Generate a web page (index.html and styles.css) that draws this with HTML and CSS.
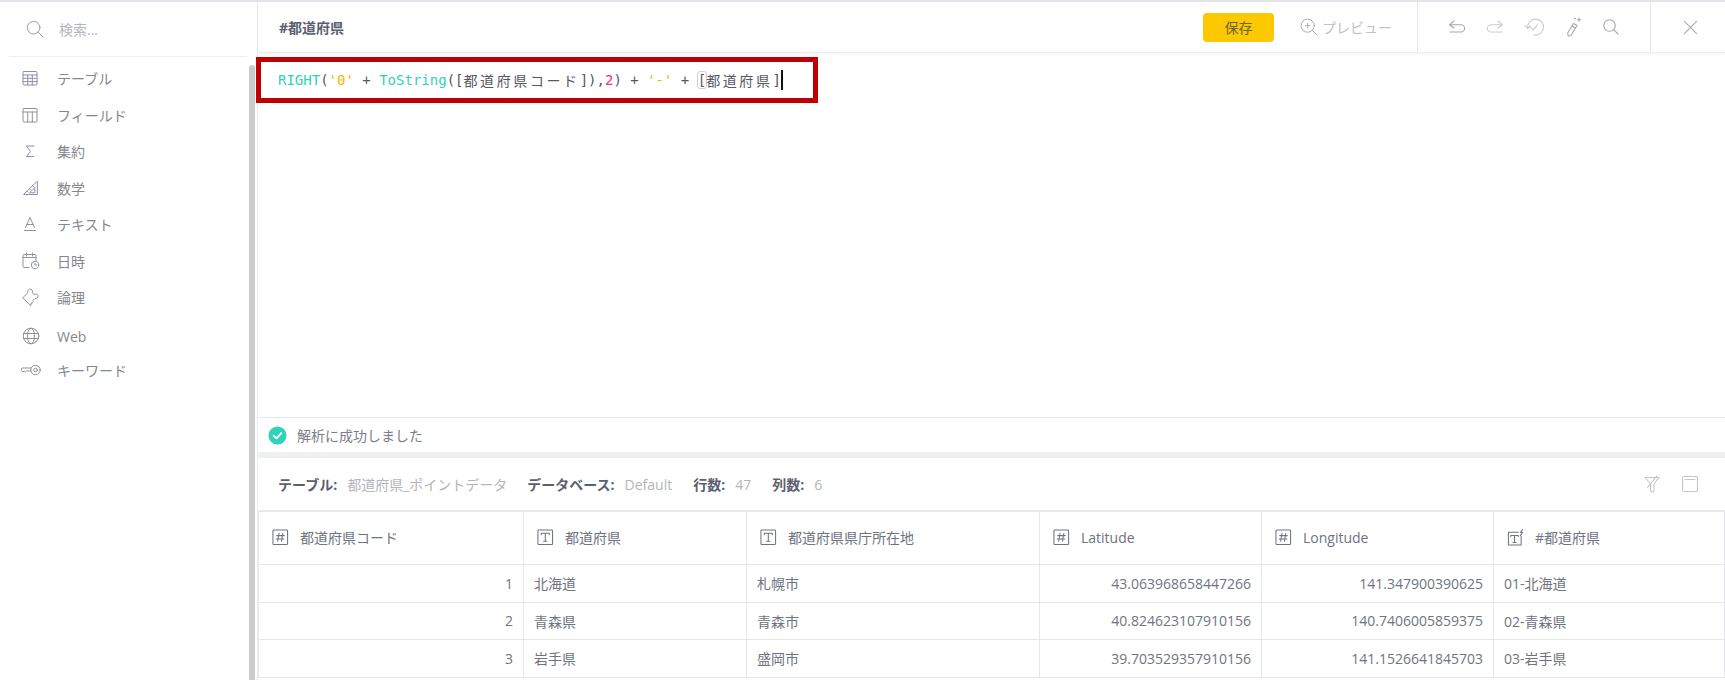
FILE: index.html
```html
<!DOCTYPE html>
<html lang="ja">
<head>
<meta charset="utf-8">
<title>#都道府県</title>
<link rel="stylesheet" href="styles.css">
</head>
<body>
<div class="app">
  <aside class="side">
    <div class="search">
      <svg class="search-ic" viewBox="0 0 20 20"><circle cx="8.500" cy="8.500" r="7"/><path d="M13.500 13.500 19 19"/></svg>
      <span>検索...</span>
    </div>
    <div class="side-body">
      <ul class="cats">
        <li><svg viewBox="0 0 16 16"><rect x="1" y="1.500" width="14" height="13.500" rx="1"/><path d="M1 5h14M1 8.300h14M1 11.600h14M5.700 5v10M10.300 5v10"/></svg>テーブル</li>
        <li><svg viewBox="0 0 16 16"><rect x="1" y="1.500" width="14" height="13.500" rx="1"/><path d="M1 5h14M5.700 5v10M10.300 5v10"/></svg>フィールド</li>
        <li><svg viewBox="0 0 16 16"><path d="M12 3H4.500L8.500 8.500 4.500 13.500H12"/></svg>集約</li>
        <li><svg viewBox="0 0 16 16"><path d="M15 1.500 1.500 14.500H15ZM12.500 8 7.500 12.800h5ZM10.500 5.500l1.500 1.500M7.500 8.500 9 10M4.800 11l1.200 1.200"/></svg>数学</li>
        <li><svg viewBox="0 0 16 16"><path d="M3.500 11.500 8 1.500l4.500 10M5 8.500h6M2.500 14.500h11"/></svg>テキスト</li>
        <li><svg class="big" viewBox="0 0 18 18"><path d="M7 15.500H2a1 1 0 0 1-1-1V3.500a1 1 0 0 1 1-1h11a1 1 0 0 1 1 1V9M1 5.500h13M4.500 1v3M10.500 1v3"/><circle cx="13" cy="13" r="3.700"/><path d="M13 11v2h1.800"/></svg>日時</li>
        <li><svg class="big" viewBox="0 0 18 18"><path d="M1 9.500 6 4.500C5 2.500 7 .5 9 1.300 10.700 2 10.800 3.700 10.200 4.800L12 6.500C13.500 5.500 15.500 6 16 7.700 16.500 9.700 14.500 11.200 13 10.500L11 12.500C12 14 10.500 15.500 9.300 14.800L8.800 17.300Z"/></svg>論理</li>
        <li><svg class="big" viewBox="0 0 18 18"><circle cx="9" cy="9" r="7.800"/><ellipse cx="9" cy="9" rx="3.500" ry="7.800"/><path d="M1.500 6.500h15M1.500 11.500h15"/></svg>Web</li>
        <li><svg class="key" viewBox="0 0 20 12"><circle cx="14.500" cy="6" r="4.700"/><circle cx="14.500" cy="6" r="1.800"/><path d="M9.800 4H1.500a1 1 0 0 0-1 1v1.800l1.500 1.200 1.200-1 1.200 1 1.200-1h4.400"/></svg>キーワード</li>
      </ul>
      <div class="thumb"></div>
    </div>
  </aside>
  <main class="main">
    <header class="top">
      <h1>#都道府県</h1>
      <button class="save">保存</button>
      <div class="preview">
        <svg viewBox="0 0 20 20"><circle cx="8.500" cy="8.500" r="7.300"/><path d="M13.800 13.800 19 19M8.500 6v5M6 8.500h5"/></svg>
        <span>プレビュー</span>
      </div>
      <div class="tools">
        <svg class="dark" viewBox="0 0 18 18"><path d="M6 3 1.500 6.800 6 10M1.500 6.800H13a3.300 3.300 0 0 1 0 7.200H2"/></svg>
        <svg viewBox="0 0 18 18"><path d="M12 3l4.500 3.800L12 10M16.500 6.800H5a3.300 3.300 0 0 0 0 7.200h11"/></svg>
        <svg class="wide" viewBox="0 0 20 20"><path d="M3.500 10.500A8 8 0 1 1 10 18M1 8.500l2.500 3 3-2.500M7 10.500l2.300 2.300 4-5"/></svg>
        <svg class="dark tall" viewBox="0 0 18 20"><path d="M9.500 6.500 13 8.500 7 18.500 4.200 19 3.700 16ZM8 9l3.500 2M15 1v3.500M13.300 2.700h3.400M10.500 1.500h1"/></svg>
        <svg class="dark" viewBox="0 0 18 18"><circle cx="7.500" cy="7.500" r="5.700"/><path d="M11.700 11.700 16 16"/></svg>
      </div>
      <div class="close">
        <svg viewBox="0 0 16 16"><path d="M1.500 1.500 14.500 14.500M14.500 1.500 1.500 14.500"/></svg>
      </div>
    </header>
    <section class="editor">
      <div class="code"><span class="fn">RIGHT</span>(<span class="str">'0'</span> + <span class="fn">ToString</span>([<span class="cjk">都道府県コード</span>]),<span class="num">2</span>) + <span class="str">'-'</span> + <span class="match">[</span><span class="cjk">都道府県</span>]<i class="caret"></i></div>
    </section>
    <div class="status">
      <svg viewBox="0 0 20 20"><circle cx="10" cy="10" r="9.500" class="ok"/><path d="M6 10.500 9 13 14 7.500" class="tick"/></svg>
      <span>解析に成功しました</span>
    </div>
    <div class="gap"></div>
    <div class="meta">
      <b>テーブル:</b><span class="v1">都道府県_ポイントデータ</span>
      <b>データベース:</b><span class="v2">Default</span>
      <b>行数:</b><span class="v3">47</span>
      <b>列数:</b><span class="v4">6</span>
      <div class="meta-ic">
        <svg viewBox="0 0 18 18"><path d="M2 2.500h14L11 9v6.500a1.700 1.700 0 0 1-3.400 0V9ZM14 .8 4.500 12.500"/></svg>
        <svg viewBox="0 0 18 18"><rect x="1.500" y="1.500" width="15" height="15" rx="1.500"/><path d="M4 4.500h10"/></svg>
      </div>
    </div>
    <table class="grid">
      <colgroup><col class="c1"><col class="c2"><col class="c3"><col class="c4"><col class="c5"><col class="c6"></colgroup>
      <thead>
        <tr>
          <th><svg viewBox="0 0 18 18"><rect x="1" y="1" width="15.500" height="15.500" rx="1"/><path d="M7.500 4.500 6 13M11.500 4.500 10 13M5 7h8M4.500 10.500h8"/></svg>都道府県コード</th>
          <th><svg viewBox="0 0 18 18"><rect x="1" y="1" width="15.500" height="15.500" rx="1"/><path d="M4.500 6V4.500h8.500V6M8.800 4.500V13M7 13h3.500"/></svg>都道府県</th>
          <th><svg viewBox="0 0 18 18"><rect x="1" y="1" width="15.500" height="15.500" rx="1"/><path d="M4.500 6V4.500h8.500V6M8.800 4.500V13M7 13h3.500"/></svg>都道府県県庁所在地</th>
          <th><svg viewBox="0 0 18 18"><rect x="1" y="1" width="15.500" height="15.500" rx="1"/><path d="M7.500 4.500 6 13M11.500 4.500 10 13M5 7h8M4.500 10.500h8"/></svg>Latitude</th>
          <th><svg viewBox="0 0 18 18"><rect x="1" y="1" width="15.500" height="15.500" rx="1"/><path d="M7.500 4.500 6 13M11.500 4.500 10 13M5 7h8M4.500 10.500h8"/></svg>Longitude</th>
          <th><svg viewBox="0 0 18 18"><path d="M12 3.500H1.500V17H15V8M4 8V6.800h8V8M8 6.800v7.500M6.300 14.300h3.400M16.500 .5l-2.300 3h2.300L14.200 7"/></svg>#都道府県</th>
        </tr>
      </thead>
      <tbody>
        <tr><td class="r">1</td><td>北海道</td><td>札幌市</td><td class="r">43.063968658447266</td><td class="r">141.347900390625</td><td>01-北海道</td></tr>
        <tr><td class="r">2</td><td>青森県</td><td>青森市</td><td class="r">40.824623107910156</td><td class="r">140.7406005859375</td><td>02-青森県</td></tr>
        <tr><td class="r">3</td><td>岩手県</td><td>盛岡市</td><td class="r">39.703529357910156</td><td class="r">141.1526641845703</td><td>03-岩手県</td></tr>
      </tbody>
    </table>
  </main>
</div>
</body>
</html>
```
FILE: styles.css
```css
* { box-sizing: border-box; }
html, body { margin: 0; height: 100%; overflow: hidden; }
body { font-family: "Open Sans", "Noto Sans CJK JP", sans-serif; background: #fff; color: #5b5f6e; }
svg { fill: none; stroke-linecap: round; stroke-linejoin: round; flex: none; }

.app { display: flex; height: 680px; border-top: 2px solid #e3e4ea; overflow: hidden; }

.side { width: 258px; flex: none; display: flex; flex-direction: column; padding-left: 9px; border-right: 1px solid #eceded; }
.search { height: 55px; width: 238px; display: flex; align-items: center; border-bottom: 1px solid #eff0f2; padding-left: 17px; font-size: 14px; color: #b4b6bd; }
.search-ic { width: 18px; height: 18px; margin-right: 15px; stroke: #9a9da8; stroke-width: 1.1; }
.side-body { flex: 1; position: relative; min-height: 0; }
.cats { list-style: none; margin: 0; padding: 3px 0 0 13px; }
.cats li { height: 36.500px; display: flex; align-items: center; font-size: 14px; color: #85878f; }
.cats li:nth-child(8) { padding-top: 5px; }
.cats svg { width: 16px; height: 16px; margin-right: 19px; stroke: #8e92a3; stroke-width: 1; }
.cats svg.big { width: 18px; height: 18px; margin-right: 17px; }
.cats svg.key { width: 20px; height: 12px; margin-left: -1px; margin-right: 16px; }
.thumb { position: absolute; right: 2px; top: 8px; bottom: 0; width: 6px; background: #cbcbcb; border-radius: 3px 3px 0 0; }

.main { flex: 1; min-width: 0; display: flex; flex-direction: column; }

.top { height: 51px; flex: none; display: flex; align-items: center; padding-left: 21px; border-bottom: 1px solid #eceef0; box-shadow: 0 1px 3px rgba(0,0,0,.06); }
.top h1 { margin: 0 auto 0 0; font-size: 14px; font-weight: 700; color: #5b5f6e; }
.save { width: 71px; height: 29px; flex: none; border: 0; border-radius: 4px; background: #fcc900; color: #6c6237; font: 14px "Open Sans", "Noto Sans CJK JP", sans-serif; padding: 0; }
.preview { display: flex; align-items: center; width: 143px; flex: none; padding-left: 26px; font-size: 14px; color: #c0c2c9; }
.preview svg { width: 18px; height: 18px; margin-right: 4px; stroke: #a9acb5; stroke-width: 1.1; }
.tools { height: 100%; width: 233px; flex: none; border-left: 1px solid #e6e7ea; display: flex; align-items: center; gap: 20px; padding-left: 30px; }
.tools svg { width: 18px; height: 18px; stroke: #c9cbd1; stroke-width: 1.1; }
.tools svg.dark { stroke: #a5a8b3; }
.tools svg.wide { width: 20px; height: 20px; }
.tools svg.tall { height: 20px; }
.close { height: 100%; width: 75px; flex: none; border-left: 1px solid #e6e7ea; display: flex; align-items: center; justify-content: center; padding-left: 5px; }
.close svg { width: 15px; height: 15px; stroke: #a5a8b3; stroke-width: 1.1; }

.editor { height: 364px; flex: none; padding-top: 4px; }
.code { width: 562px; height: 46px; margin-left: -2px; border: 5px solid #c00000; padding: 0 0 0 17px; display: flex; align-items: center; font: 14px "DejaVu Sans Mono", monospace; color: #55585f; white-space: pre; }
.fn { color: #2fd3b9; }
.str { color: #f5b400; }
.num { color: #f0307f; }
.cjk { font-family: "Noto Sans CJK JP", sans-serif; letter-spacing: 2.600px; }
.match { outline: 1px solid #cfd1d6; border-radius: 2px; }
.caret { display: inline-block; width: 2px; height: 20px; background: #111; }

.status { height: 35px; flex: none; border-top: 1px solid #e6e7ea; display: flex; align-items: center; padding-left: 10px; font-size: 14px; color: #7a7d87; }
.status svg { width: 19px; height: 19px; margin-right: 10px; }
.ok { fill: #2fd3b9; }
.tick { stroke: #fff; stroke-width: 2; }
.gap { height: 6px; flex: none; background: #eff0f2; }

.meta { height: 53px; flex: none; display: flex; align-items: center; padding-left: 20px; font-size: 14px; color: #b3b5bb; border-bottom: 1px solid #e9eaec; }
.meta b { color: #5b5f6e; margin-right: 10px; }
.v1 { margin-right: 20px; }
.v2 { margin-right: 21px; }
.v3 { margin-right: 21px; }
.meta-ic { margin-left: auto; display: flex; align-items: center; gap: 20px; padding-right: 26px; }
.meta-ic svg { height: 18px; width: 18px; stroke: #c4c6cc; stroke-width: 1.1; }

.grid { width: 1467px; table-layout: fixed; border-collapse: collapse; font-size: 14px; color: #707480; }
.c1 { width: 265px; } .c2 { width: 223px; } .c3 { width: 293px; } .c4 { width: 222px; } .c5 { width: 232px; }
.grid th, .grid td { border: 1px solid #e6e7ea; padding: 0 10px; overflow: hidden; white-space: nowrap; }
.grid th { height: 53px; font-weight: 400; text-align: left; padding: 0 10px 2px 13px; color: #6f7380; }
.grid th svg { width: 17px; height: 17px; stroke: #6f7380; stroke-width: 1.1; margin-right: 11px; vertical-align: -3px; }
.grid td { height: 37.500px; }
.grid td.r { text-align: right; }
```
